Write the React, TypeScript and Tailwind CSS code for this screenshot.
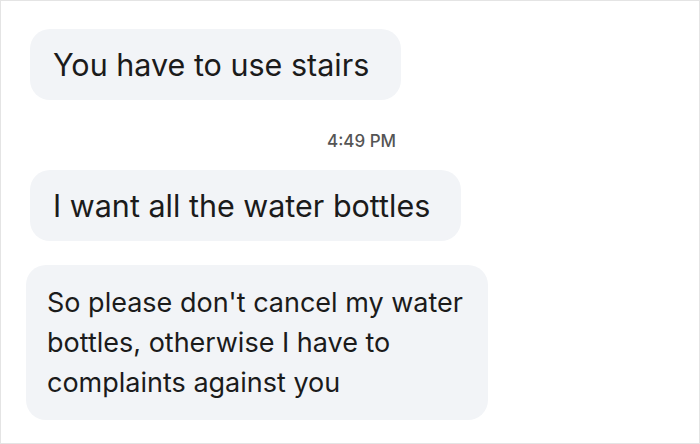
export default function App() {
  return (
    <div className="w-[700px] h-[444px] bg-white border border-[#e4e4e4] overflow-hidden font-['Inter','Noto_Sans',sans-serif] text-[#1b1b1b]">
      <div className="flex flex-col items-start pt-[28px]">
        {/* first message */}
        <div className="ml-[29px] w-[371px] h-[71px] rounded-[20px] bg-[#f2f4f7] pl-[23px] flex items-center text-[30.5px] leading-[39px]">
          You have to use stairs
        </div>

        {/* time stamp */}
        <div className="self-stretch flex justify-start pl-[326px] mt-[31px] text-[17px] leading-[20px] font-medium text-[#555]">
          4:49 PM
        </div>

        {/* second message */}
        <div className="ml-[29px] mt-[19px] w-[431px] h-[71px] rounded-[20px] bg-[#f2f4f7] pl-[23px] flex items-center text-[30.5px] leading-[39px]">
          I want all the water bottles
        </div>

        {/* third message */}
        <div className="ml-[25px] mt-[24px] w-[462px] h-[155px] rounded-[20px] bg-[#f2f4f7] pl-[21px] flex items-center text-[27px] leading-[40px]">
          <p>
            So please don't cancel my water
            <br />
            bottles, otherwise I have to
            <br />
            complaints against you
          </p>
        </div>
      </div>
    </div>
  );
}
